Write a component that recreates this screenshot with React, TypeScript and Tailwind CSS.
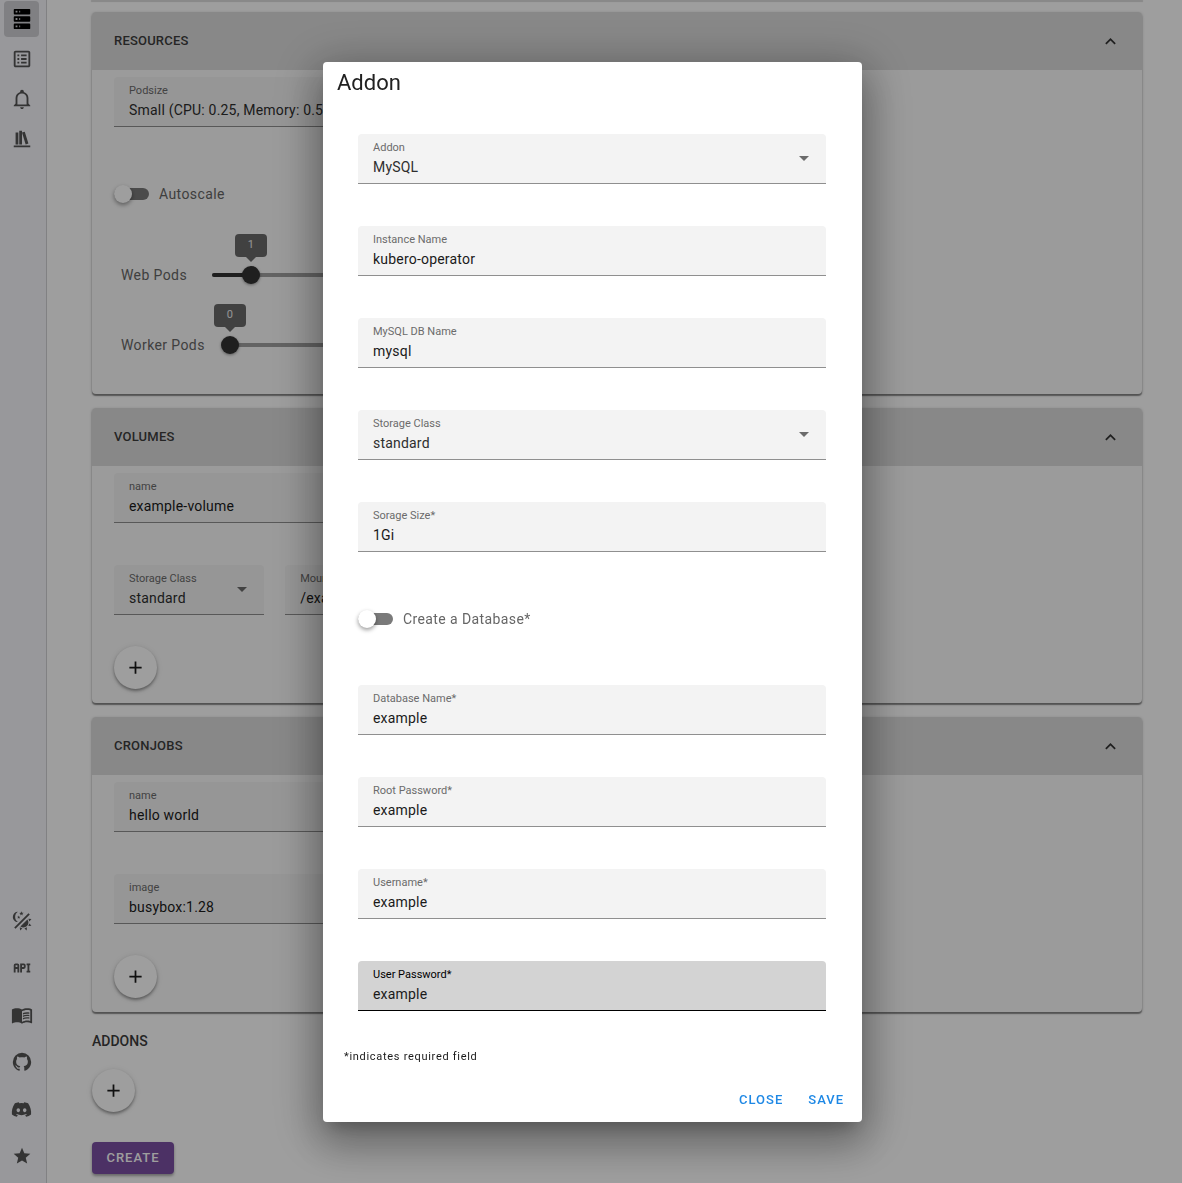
import React, { useState } from 'react';
import { FaDiscord } from 'react-icons/fa';
import { MdMenuBook } from 'react-icons/md';

interface FieldProps {
  label: string;
  value: string;
  focused?: boolean;
  className?: string;
}

interface SelectFieldProps extends FieldProps {
  options: string[];
}

const FIELD = 'relative flex h-[50px] flex-col rounded-t border-b pt-2 px-[15px]';

const TextField: React.FC<FieldProps> = ({ label, value, focused = false, className = '' }) => {
  const [text, setText] = useState(value);
  return (
    <label className={`${FIELD} ${focused ? 'border-black bg-[#d3d3d3]' : 'border-[#8f8f8f] bg-[#f3f3f3]'} ${className}`}>
      <span className={`text-[11px] leading-3 whitespace-nowrap ${focused ? 'text-black' : 'text-[#6b6b6b]'}`}>{label}</span>
      <input
        type="text"
        value={text}
        onChange={(e) => setText(e.target.value)}
        className="h-[26px] w-full bg-transparent text-sm text-[#1a1a1a] tracking-[0.2px] outline-none"
      />
    </label>
  );
};

const SelectField: React.FC<SelectFieldProps> = ({ label, value, options, className = '' }) => {
  const [selected, setSelected] = useState(value);
  return (
    <label className={`${FIELD} border-[#8f8f8f] bg-[#f3f3f3] ${className}`}>
      <span className="text-[11px] leading-3 whitespace-nowrap text-[#6b6b6b]">{label}</span>
      <select
        value={selected}
        onChange={(e) => setSelected(e.target.value)}
        className="h-[26px] w-full appearance-none bg-transparent text-sm text-[#2e2e2e] tracking-[0.2px] outline-none"
      >
        {options.map((option) => (
          <option key={option} value={option}>{option}</option>
        ))}
      </select>
      <svg viewBox="0 0 10 5" className="pointer-events-none absolute right-[17px] top-[22px] h-[5px] w-[10px] fill-[#6b6b6b]">
        <path d="M0 0h10L5 5z" />
      </svg>
    </label>
  );
};

const Switch: React.FC<{ label: string }> = ({ label }) => {
  const [on, setOn] = useState(false);
  return (
    <label className="flex cursor-pointer items-center gap-[10px]">
      <input type="checkbox" role="switch" checked={on} onChange={() => setOn(!on)} className="sr-only" />
      <span className={`flex h-3 w-[35px] items-center rounded-full bg-[#7a7a7a] ${on ? 'justify-end' : ''}`}>
        <span className="h-[18px] w-[18px] shrink-0 rounded-full bg-white shadow-[0_2px_4px_rgba(0,0,0,0.4)]"></span>
      </span>
      <span className="text-sm text-[#666666] tracking-[0.4px]">{label}</span>
    </label>
  );
};

const Slider: React.FC<{ label: string; initial: number }> = ({ label, initial }) => {
  const [value, setValue] = useState(initial);
  const max = 10;
  const position = `${(value / max) * 100}%`;
  return (
    <label className="flex h-[70px] items-center gap-[25px] px-[7px]">
      <span className="text-sm whitespace-nowrap text-[#666666] tracking-[0.4px]">{label}</span>
      <span className="relative h-5 flex-1">
        <span className="absolute inset-x-0 top-2 h-1 rounded-full bg-[#a0a0a0]"></span>
        <span className="absolute left-0 top-2 h-1 rounded-full bg-[#333333]" style={{ width: position }}></span>
        <span className="absolute top-[1px] h-[18px] w-[18px] -translate-x-1/2 rounded-full bg-[#333333] shadow-[0_1px_3px_rgba(0,0,0,0.4)]" style={{ left: position }}></span>
        <span className="absolute -top-[31px] flex h-[23px] w-8 -translate-x-1/2 items-center justify-center rounded bg-[#6a6a6a] text-[11px] text-[#eeeeee]" style={{ left: position }}>
          {value}
          <span className="absolute top-full border-x-[5px] border-t-[5px] border-x-transparent border-t-[#6a6a6a]"></span>
        </span>
        <input
          type="range"
          min={0}
          max={max}
          value={value}
          onChange={(e) => setValue(Number(e.target.value))}
          className="absolute inset-0 w-full cursor-pointer opacity-0"
        />
      </span>
    </label>
  );
};

const AddButton: React.FC<{ label: string }> = ({ label }) => (
  <button
    aria-label={label}
    className="flex h-[43px] w-[43px] items-center justify-center rounded-full bg-white shadow-[0_2px_3px_rgba(0,0,0,0.35),0_1px_6px_rgba(0,0,0,0.12)]"
  >
    <Icon d="M19 13h-6v6h-2v-6H5v-2h6V5h2v6h6z" className="h-[21px] w-[21px] fill-[#1a1a1a]" />
  </button>
);

const Panel: React.FC<{ title: string; children: React.ReactNode }> = ({ title, children }) => {
  const [open, setOpen] = useState(true);
  return (
    <section className="rounded bg-[#fafafa] shadow-[0_2px_1px_rgba(0,0,0,0.35),0_1px_3px_rgba(0,0,0,0.3)]">
      <button
        onClick={() => setOpen(!open)}
        className="flex h-[58px] w-full items-center justify-between rounded-t bg-[#dcdcdc] pl-[22px] pr-[21px] text-left"
      >
        <span className="text-[13px] font-medium text-[#3c3c3c] tracking-[0.2px]">{title}</span>
        <Icon d="M7.41 15.41 12 10.83l4.59 4.58L18 14l-6-6-6 6z" className="h-[21px] w-[21px] fill-[#333333]" />
      </button>
      {open && <div className="px-[22px] pt-[7px] pb-[14px]">{children}</div>}
    </section>
  );
};

const Icon: React.FC<{ d: string; className?: string }> = ({ d, className = 'h-[22px] w-[22px]' }) => (
  <svg viewBox="0 0 24 24" fill="currentColor" className={className}>
    <path d={d} />
  </svg>
);

const ICONS = {
  server: 'M4 1h16a1 1 0 0 1 1 1v4a1 1 0 0 1-1 1H4a1 1 0 0 1-1-1V2a1 1 0 0 1 1-1m0 8h16a1 1 0 0 1 1 1v4a1 1 0 0 1-1 1H4a1 1 0 0 1-1-1v-4a1 1 0 0 1 1-1m0 8h16a1 1 0 0 1 1 1v4a1 1 0 0 1-1 1H4a1 1 0 0 1-1-1v-4a1 1 0 0 1 1-1M9 5h1V3H9zm0 8h1v-2H9zm0 8h1v-2H9zM5 3v2h2V3zm0 8v2h2v-2zm0 8v2h2v-2z',
  list: 'M11 15h6v2h-6zM9 7H7v2h2zm2 6h6v-2h-6zm0-4h6V7h-6zm-2 2H7v2h2zm12-6v14c0 1.1-.9 2-2 2H5c-1.1 0-2-.9-2-2V5c0-1.1.9-2 2-2h14c1.1 0 2 .9 2 2m-2 0H5v14h14zM9 15H7v2h2z',
  bell: 'M10 21h4c0 1.1-.9 2-2 2s-2-.9-2-2m11-2v1H3v-1l2-2v-6c0-3.1 2-5.8 5-6.7V4c0-1.1.9-2 2-2s2 .9 2 2v.3c3 .9 5 3.6 5 6.7v6zm-4-8c0-2.8-2.2-5-5-5s-5 2.2-5 5v7h10z',
  shelf: 'M9 3v15h3V3zm3 2 4 13 3-1-4-13zM5 5v13h3V5zM3 19v2h18v-2z',
  theme: 'M7.5 2c-1.79 1.15-3 3.18-3 5.5s1.21 4.35 3.03 5.5C4.46 13 2 10.54 2 7.5A5.5 5.5 0 0 1 7.5 2m11.57 1.5 1.43 1.43L4.93 20.5 3.5 19.07zm-6.18 2.43L11.41 5 9.97 6l.42-1.7L9 3.24l1.75-.12.58-1.65L12 3.1l1.73.03-1.35 1.13zm-3.3 3.61-1.16-.73-1.12.78.34-1.32-1.09-.83 1.36-.09.45-1.29.51 1.27 1.36.03-1.05.87zM19 13.5a5.5 5.5 0 0 1-5.5 5.5c-1.22 0-2.35-.4-3.26-1.07l7.69-7.69c.67.91 1.07 2.04 1.07 3.26m-4.4 6.58 2.77-1.15-.24 3.35zm4.33-2.7 1.15-2.77 2.2 2.54zm1.15-4.96-1.14-2.78 3.34.24zM9.63 18.93l2.77 1.15-2.53 2.19z',
  api: 'M7 7H5a2 2 0 0 0-2 2v8h2v-4h2v4h2V9a2 2 0 0 0-2-2m0 4H5V9h2m7-2h-4v10h2v-4h2a2 2 0 0 0 2-2V9a2 2 0 0 0-2-2m0 4h-2V9h2m6 0v6h1v2h-4v-2h1V9h-1V7h4v2z',
  github: 'M12 2A10 10 0 0 0 2 12c0 4.42 2.87 8.17 6.84 9.5.5.08.66-.23.66-.5v-1.69c-2.77.6-3.36-1.34-3.36-1.34-.46-1.16-1.11-1.47-1.11-1.47-.91-.62.07-.6.07-.6 1 .07 1.53 1.03 1.53 1.03.87 1.52 2.34 1.07 2.91.83.09-.65.35-1.09.63-1.34-2.22-.25-4.55-1.11-4.55-4.92 0-1.11.38-2 1.03-2.71-.1-.25-.45-1.29.1-2.64 0 0 .84-.27 2.75 1.02.79-.22 1.65-.33 2.5-.33s1.71.11 2.5.33c1.91-1.29 2.75-1.02 2.75-1.02.55 1.35.2 2.39.1 2.64.65.71 1.03 1.6 1.03 2.71 0 3.82-2.34 4.66-4.57 4.91.36.31.69.92.69 1.85V21c0 .27.16.59.67.5C19.14 20.16 22 16.42 22 12A10 10 0 0 0 12 2',
  star: 'M12 17.27 18.18 21l-1.64-7.03L22 9.24l-7.19-.62L12 2 9.19 8.62 2 9.24l5.45 4.73L5.82 21z',
};

const NAV_LINK = 'flex h-9 w-[35px] items-center justify-center rounded';

const Sidebar: React.FC = () => (
  <nav className="flex w-[47px] shrink-0 flex-col items-center justify-between border-r border-[#d0d0d4] bg-[#f5f5fa] pt-px pr-[3px] pb-[9px] text-[#555555]">
    <div className="flex flex-col items-center gap-1">
      <a href="#pipelines" aria-label="Pipelines" className={`${NAV_LINK} bg-[#cfcfd3] text-black`}><Icon d={ICONS.server} /></a>
      <a href="#templates" aria-label="Templates" className={NAV_LINK}><Icon d={ICONS.list} /></a>
      <a href="#activity" aria-label="Activity" className={NAV_LINK}><Icon d={ICONS.bell} /></a>
      <a href="#library" aria-label="Library" className={NAV_LINK}><Icon d={ICONS.shelf} /></a>
    </div>
    <div className="flex flex-col items-center gap-[11px]">
      <button aria-label="Toggle theme" className={NAV_LINK}><Icon d={ICONS.theme} /></button>
      <a href="#api" aria-label="API" className={NAV_LINK}><Icon d={ICONS.api} /></a>
      <a href="#docs" aria-label="Documentation" className={NAV_LINK}><MdMenuBook className="h-[22px] w-[22px]" /></a>
      <a href="#github" aria-label="GitHub" className={NAV_LINK}><Icon d={ICONS.github} /></a>
      <a href="#discord" aria-label="Discord" className={NAV_LINK}><FaDiscord className="h-[21px] w-[21px]" /></a>
      <a href="#star" aria-label="Star" className={NAV_LINK}><Icon d={ICONS.star} className="h-5 w-5" /></a>
    </div>
  </nav>
);

const AddonDialog: React.FC = () => (
  <div className="fixed inset-0 z-10 flex items-center justify-center bg-black/38 pt-px pl-[3px]">
    <div
      role="dialog"
      aria-label="Addon"
      className="w-[539px] rounded bg-white shadow-[0_11px_15px_-7px_rgba(0,0,0,0.2),0_24px_38px_3px_rgba(0,0,0,0.14),0_9px_46px_8px_rgba(0,0,0,0.3)]"
    >
      <h2 className="px-[14px] pt-[6px] text-[22px] leading-[30px] text-[#212121]">Addon</h2>
      <form className="flex flex-col gap-[42px] pt-9 pr-9 pl-[35px]">
        <SelectField label="Addon" value="MySQL" options={['MySQL', 'PostgreSQL', 'Redis', 'MongoDB']} />
        <TextField label="Instance Name" value="kubero-operator" />
        <TextField label="MySQL DB Name" value="mysql" />
        <SelectField label="Storage Class" value="standard" options={['standard']} />
        <TextField label="Sorage Size*" value="1Gi" />
        <div className="flex h-[49px] items-center">
          <Switch label="Create a Database*" />
        </div>
        <TextField label="Database Name*" value="example" />
        <TextField label="Root Password*" value="example" />
        <TextField label="Username*" value="example" />
        <TextField label="User Password*" value="example" focused />
      </form>
      <p className="px-[21px] pt-[37px] text-[11px] leading-[18px] text-[#1a1a1a] tracking-[0.7px]">*indicates required field</p>
      <div className="flex h-14 items-center justify-end gap-[25px] pt-[11px] pr-[18px]">
        <button className="text-[13px] font-medium text-[#1e88e5] tracking-[1px]">CLOSE</button>
        <button className="text-[13px] font-medium text-[#1e88e5] tracking-[1px]">SAVE</button>
      </div>
    </div>
  </div>
);

export default function App() {
  return (
    <div className="flex h-screen overflow-hidden bg-white font-['Roboto','Liberation_Sans',sans-serif]">
      <Sidebar />
      <main className="flex min-w-0 flex-1 flex-col pr-10 pl-[45px]">
        <div className="mb-3 h-0 shrink-0 shadow-[0_1px_1px_1px_rgba(0,0,0,0.15)]"></div>
        <div className="flex flex-col gap-[14px]">
          <Panel title="RESOURCES">
            <div className="grid grid-cols-6 gap-x-[21px]">
              <div className="col-span-3">
                <SelectField
                  label="Podsize"
                  value="Small (CPU: 0.25, Memory: 0.5Gi)"
                  options={['Small (CPU: 0.25, Memory: 0.5Gi)', 'Medium (CPU: 1, Memory: 2Gi)']}
                />
                <div className="flex h-[113px] items-center pt-5">
                  <Switch label="Autoscale" />
                </div>
                <Slider label="Web Pods" initial={1} />
                <Slider label="Worker Pods" initial={0} />
              </div>
            </div>
          </Panel>
          <Panel title="VOLUMES">
            <div className="grid grid-cols-6 gap-x-[21px] gap-y-[42px]">
              <TextField label="name" value="example-volume" className="col-span-3" />
              <SelectField label="Storage Class" value="standard" options={['standard']} className="col-start-1" />
              <TextField label="Mount Path" value="/example/path" className="col-span-2" />
            </div>
            <div className="pt-[31px]">
              <AddButton label="Add volume" />
            </div>
          </Panel>
          <Panel title="CRONJOBS">
            <div className="grid grid-cols-6 gap-x-[21px] gap-y-[42px]">
              <TextField label="name" value="hello world" className="col-span-3" />
              <TextField label="image" value="busybox:1.28" className="col-span-3 col-start-1" />
            </div>
            <div className="pt-[31px]">
              <AddButton label="Add cronjob" />
            </div>
          </Panel>
        </div>
        <h3 className="pt-[19px] pb-[18px] text-sm leading-5 font-medium text-[#3c3c3c]">ADDONS</h3>
        <AddButton label="Add addon" />
        <button className="mt-[30px] h-8 w-[82px] shrink-0 rounded bg-[#7b4fa3] text-[13px] font-medium text-white shadow-[0_2px_3px_rgba(0,0,0,0.35)] tracking-[1px]">
          CREATE
        </button>
      </main>
      <AddonDialog />
    </div>
  );
}
